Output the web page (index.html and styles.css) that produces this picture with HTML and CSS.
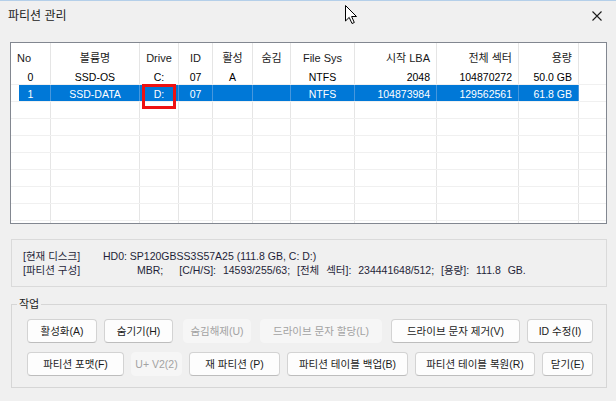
FILE: index.html
```html
<!DOCTYPE html>
<html lang="ko">
<head>
<meta charset="utf-8">
<title>파티션 관리</title>
<link rel="stylesheet" href="styles.css">
</head>
<body>
<div class="window">
  <div class="topedge"></div>
  <div class="titlebar">
    <span class="title">파티션 관리</span>
    <svg class="close" width="10" height="10" viewBox="0 0 10 10"><path d="M0.5 0.5 L9.5 9.5 M9.5 0.5 L0.5 9.5" stroke="#1a1a1a" stroke-width="1.1" fill="none"/></svg>
  </div>

  <div class="list">
    <div class="row head">
      <div class="cell l">No</div>
      <div class="cell">볼륨명</div>
      <div class="cell">Drive</div>
      <div class="cell">ID</div>
      <div class="cell">활성</div>
      <div class="cell">숨김</div>
      <div class="cell">File Sys</div>
      <div class="cell r">시작 LBA</div>
      <div class="cell r">전체 섹터</div>
      <div class="cell r">용량</div>
      <div class="cell"></div>
    </div>
    <div class="row">
      <div class="cell">0</div>
      <div class="cell">SSD-OS</div>
      <div class="cell">C:</div>
      <div class="cell">07</div>
      <div class="cell">A</div>
      <div class="cell"></div>
      <div class="cell">NTFS</div>
      <div class="cell r">2048</div>
      <div class="cell r">104870272</div>
      <div class="cell r">50.0 GB</div>
      <div class="cell"></div>
    </div>
    <div class="row sel">
      <div class="cell">1</div>
      <div class="cell">SSD-DATA</div>
      <div class="cell">D:</div>
      <div class="cell">07</div>
      <div class="cell"></div>
      <div class="cell"></div>
      <div class="cell">NTFS</div>
      <div class="cell r">104873984</div>
      <div class="cell r">129562561</div>
      <div class="cell r">61.8 GB</div>
      <div class="cell"></div>
    </div>
    <div class="row"><div class="cell"></div><div class="cell"></div><div class="cell"></div><div class="cell"></div><div class="cell"></div><div class="cell"></div><div class="cell"></div><div class="cell"></div><div class="cell"></div><div class="cell"></div><div class="cell"></div></div>
    <div class="row"><div class="cell"></div><div class="cell"></div><div class="cell"></div><div class="cell"></div><div class="cell"></div><div class="cell"></div><div class="cell"></div><div class="cell"></div><div class="cell"></div><div class="cell"></div><div class="cell"></div></div>
    <div class="row"><div class="cell"></div><div class="cell"></div><div class="cell"></div><div class="cell"></div><div class="cell"></div><div class="cell"></div><div class="cell"></div><div class="cell"></div><div class="cell"></div><div class="cell"></div><div class="cell"></div></div>
    <div class="row"><div class="cell"></div><div class="cell"></div><div class="cell"></div><div class="cell"></div><div class="cell"></div><div class="cell"></div><div class="cell"></div><div class="cell"></div><div class="cell"></div><div class="cell"></div><div class="cell"></div></div>
    <div class="row"><div class="cell"></div><div class="cell"></div><div class="cell"></div><div class="cell"></div><div class="cell"></div><div class="cell"></div><div class="cell"></div><div class="cell"></div><div class="cell"></div><div class="cell"></div><div class="cell"></div></div>
    <div class="row"><div class="cell"></div><div class="cell"></div><div class="cell"></div><div class="cell"></div><div class="cell"></div><div class="cell"></div><div class="cell"></div><div class="cell"></div><div class="cell"></div><div class="cell"></div><div class="cell"></div></div>
    <div class="row"><div class="cell"></div><div class="cell"></div><div class="cell"></div><div class="cell"></div><div class="cell"></div><div class="cell"></div><div class="cell"></div><div class="cell"></div><div class="cell"></div><div class="cell"></div><div class="cell"></div></div>
    <div class="row last"><div class="cell"></div><div class="cell"></div><div class="cell"></div><div class="cell"></div><div class="cell"></div><div class="cell"></div><div class="cell"></div><div class="cell"></div><div class="cell"></div><div class="cell"></div><div class="cell"></div></div>
    <div class="mark"></div>
  </div>

  <div class="info">
    <div class="info-line"><span class="info-label">[현재 디스크]</span><span>HD0: SP120GBSS3S57A25 (111.8 GB, C: D:)</span></div>
    <div class="info-line"><span class="info-label">[파티션 구성]</span><span class="mbr">MBR;</span><span class="spaced">[C/H/S]: 14593/255/63; [전체 섹터]: 234441648/512; [용량]: 111.8 GB.</span></div>
  </div>

  <fieldset class="ops">
    <legend>작업</legend>
    <div class="btn-rows">
      <div class="btn-row">
        <div class="btn w70">활성화(A)</div>
        <div class="btn w69">숨기기(H)</div>
        <div class="btn w68 off gap3">숨김해제(U)</div>
        <div class="btn w122 off gap2">드라이브 문자 할당(L)</div>
        <div class="btn w129 gap2">드라이브 문자 제거(V)</div>
        <div class="btn w66">ID 수정(I)</div>
      </div>
      <div class="btn-row">
        <div class="btn w97">파티션 포맷(F)</div>
        <div class="btn w51 off">U+ V2(2)</div>
        <div class="btn w91">재 파티션 (P)</div>
        <div class="btn w121">파티션 테이블 백업(B)</div>
        <div class="btn w120">파티션 테이블 복원(R)</div>
        <div class="btn w51">닫기(E)</div>
      </div>
    </div>
  </fieldset>

  <svg class="cursor" width="14" height="21" viewBox="0 0 14 21"><path d="M1.5 1.5 L1.5 17 L5.2 13.4 L8 19.5 L10.3 18.5 L7.6 12.5 L12.5 12.5 Z" fill="#fff" stroke="#000" stroke-width="1" stroke-linejoin="round"/></svg>
</div>
</body>
</html>
```

FILE: styles.css
```css
* { box-sizing: border-box; }
html, body { margin: 0; padding: 0; }
body {
  width: 616px;
  height: 401px;
  overflow: hidden;
  background: #f0f0f0;
  font-family: "Liberation Sans", "Noto Sans CJK KR", sans-serif;
  font-size: 10.5px;
  color: #000;
}
.window { position: relative; width: 616px; height: 401px; }
.topedge { height: 1px; background: #b4cfe9; }
.titlebar {
  height: 29px;
  display: flex;
  align-items: center;
  justify-content: space-between;
  padding: 0 14px 0 8px;
}
.title { font-size: 12px; line-height: 16px; color: #1a1a1a; }
.close { display: block; }

.list {
  position: relative;
  margin: 12px 9px 0 10px;
  height: 182px;
  border: 1px solid #828790;
  background: #fff;
  overflow: hidden;
}
.row {
  display: grid;
  grid-template-columns: 40px 89px 39px 34px 40px 38px 64px 82px 82px 60px 1fr;
  height: 17px;
  border-bottom: 1px solid #f0f0f0;
}
.row.head { height: 25px; border-bottom: none; }
.cell {
  display: flex;
  align-items: center;
  justify-content: center;
  padding: 2px 6px 0 6px;
  border-right: 1px solid #e5e5e5;
  white-space: nowrap;
  line-height: 12px;
  overflow: hidden;
}
.head .cell { padding-top: 4px; color: #1a1a1a; font-size: 11px; }
.cell.r { justify-content: flex-end; }
.cell.l { justify-content: flex-start; }
.cell:last-child { border-right: none; }
.row.sel .cell { background: #0078d7; color: #fff; border-right-color: #4797dd; }
.row.sel .cell:first-child { background: linear-gradient(to right, #fff 8px, #0078d7 8px); }
.row.sel .cell:last-child { background: #fff; }
.mark {
  position: absolute;
  left: 131px;
  top: 41px;
  width: 34px;
  height: 25px;
  border: 3px solid #ee1111;
}

.info {
  margin: 15px 9px 0 11px;
  height: 48px;
  border: 1px solid #dadada;
  padding: 9px 0 0 11px;
  color: #1f1f38;
}
.info-line { display: flex; height: 14px; line-height: 14px; white-space: nowrap; }
.info-label { width: 80px; }
.mbr { margin-left: 34px; margin-right: 16px; }
.spaced { word-spacing: 4px; }

.ops {
  margin: 10px 9px 0 11px;
  border: 1px solid #d6d6d6;
  padding: 8px 0 11px 5px;
  min-width: 0;
}
.ops legend {
  padding: 0 2px;
  font-size: 11px;
  line-height: 14px;
  color: #1a1a1a;
}
.btn-rows { padding-left: 10px; }
.btn-row { display: flex; gap: 7px; }
.btn-row + .btn-row { margin-top: 9px; }
.btn {
  height: 24px;
  display: flex;
  align-items: center;
  justify-content: center;
  border: 1px solid #d3d3d3;
  border-bottom-color: #bdbdbd;
  border-radius: 4px;
  background: #fdfdfd;
  color: #1b1b1b;
  white-space: nowrap;
  line-height: 14px;
}
.btn.off { background: #f6f6f6; border-color: #f6f6f6; color: #a2a2a2; }
.gap2 { margin-left: 2px; }
.gap3 { margin-left: 3px; }
.w51 { width: 51px; }
.w66 { width: 66px; }
.w68 { width: 68px; }
.w69 { width: 69px; }
.w70 { width: 70px; }
.w91 { width: 91px; }
.w97 { width: 97px; }
.w120 { width: 120px; }
.w121 { width: 121px; }
.w122 { width: 122px; }
.w129 { width: 129px; }

.cursor { position: absolute; left: 344px; top: 4px; }
```
